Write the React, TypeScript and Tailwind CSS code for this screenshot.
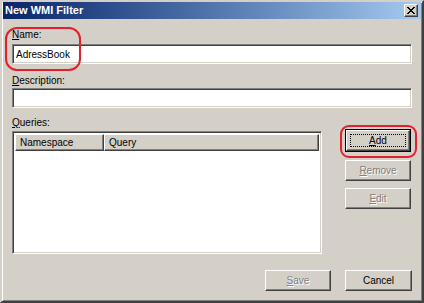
import React from 'react';

// New WMI Filter dialog — classic Windows 2000 look

const raised =
  'border border-t-white border-l-white border-b-[#404040] border-r-[#404040] shadow-[inset_-1px_-1px_0_#808080,inset_1px_1px_0_#d4d0c8]';
const sunken =
  'border border-t-[#808080] border-l-[#808080] border-b-white border-r-white shadow-[inset_1px_1px_0_#404040,inset_-1px_-1px_0_#d4d0c8]';

function Btn({ label, hot, disabled, isDefault }: { label: string; hot: number; disabled?: boolean; isDefault?: boolean }) {
  const text = (
    <span className={disabled ? 'text-[#808080] [text-shadow:1px_1px_0_#fff]' : 'text-black'}>
      {label.slice(0, hot)}
      <u>{label[hot]}</u>
      {label.slice(hot + 1)}
    </span>
  );
  if (isDefault) {
    return (
      <div className="w-[66px] h-[23px] border border-black">
        <div className={`w-full h-full flex items-center justify-center p-[3px] ${raised}`}>
          <div className="w-full h-full border border-dotted border-black flex items-center justify-center">{text}</div>
        </div>
      </div>
    );
  }
  return <div className={`w-[66px] h-[21px] flex items-center justify-center ${raised}`}>{text}</div>;
}

export default function App() {
  return (
    <div
      className="relative w-[424px] h-[303px] bg-[#d4d0c8] border-2 border-t-[#d4d0c8] border-l-[#d4d0c8] border-b-[#404040] border-r-[#404040] shadow-[inset_1px_1px_0_#fff,inset_-1px_-1px_0_#808080] text-[10px] leading-[13px] text-black overflow-hidden"
      style={{ fontFamily: '"Liberation Sans", Arial, sans-serif' }}
    >
      {/* Title bar */}
      <div className="h-[17px] mx-[1px] flex items-center justify-between pl-[2px] pr-[3px] bg-gradient-to-r from-[#0a246a] to-[#a6caf0]">
        <span className="text-white font-bold text-[11px]">New WMI Filter</span>
        <div className={`w-[14px] h-[13px] flex items-center justify-center ${raised} bg-[#d4d0c8]`}>
          <svg width="8" height="7" viewBox="0 0 8 7">
            <path d="M0 0h2v1h1v1h2V1h1V0h2v1H7v1H6v1H5v1h1v1h1v1h1v1H6V6H5V5H3v1H2v1H0V6h1V5h1V4h1V3H2V2H1V1H0z" fill="#000" />
          </svg>
        </div>
      </div>

      {/* Body */}
      <div className="px-[10px] pt-[9px] flex flex-col">
        <div className="h-[13px]"><u>N</u>ame:</div>
        <div className={`mt-[3px] h-[20px] w-[400px] bg-white flex items-center px-[3px] ${sunken}`}>AdressBook</div>

        <div className="mt-[10px] h-[13px]"><u>D</u>escription:</div>
        <div className={`mt-[1px] h-[20px] w-[400px] bg-white ${sunken}`} />

        <div className="mt-[8px] h-[13px]"><u>Q</u>ueries:</div>
        <div className="flex">
          <div className={`mt-[2px] w-[310px] h-[123px] bg-white p-[2px] ${sunken}`}>
            <div className="flex h-[17px]">
              <div className={`w-[89px] h-full bg-[#d4d0c8] flex items-center pl-[4px] ${raised}`}>Namespace</div>
              <div className={`flex-1 h-full bg-[#d4d0c8] flex items-center pl-[4px] ${raised}`}>Query</div>
            </div>
          </div>
          <div className="ml-[23px] flex flex-col gap-[7px]">
            <Btn label="Add" hot={0} isDefault />
            <div className="mt-[1px]"><Btn label="Remove" hot={0} disabled /></div>
            <Btn label="Edit" hot={0} disabled />
          </div>
        </div>

        <div className="mt-[16px] flex justify-end gap-[14px] w-[400px]">
          <Btn label="Save" hot={0} disabled />
          <div className={`w-[67px] h-[21px] flex items-center justify-center ${raised}`}>Cancel</div>
        </div>
      </div>

      {/* Red annotation marks */}
      <div className="absolute left-[3px] top-[25px] w-[76px] h-[44px] border-2 border-[#e0202c] rounded-[12px]" />
      <div className="absolute left-[338px] top-[123px] w-[77px] h-[33px] border-2 border-[#e0202c] rounded-[9px]" />
    </div>
  );
}
